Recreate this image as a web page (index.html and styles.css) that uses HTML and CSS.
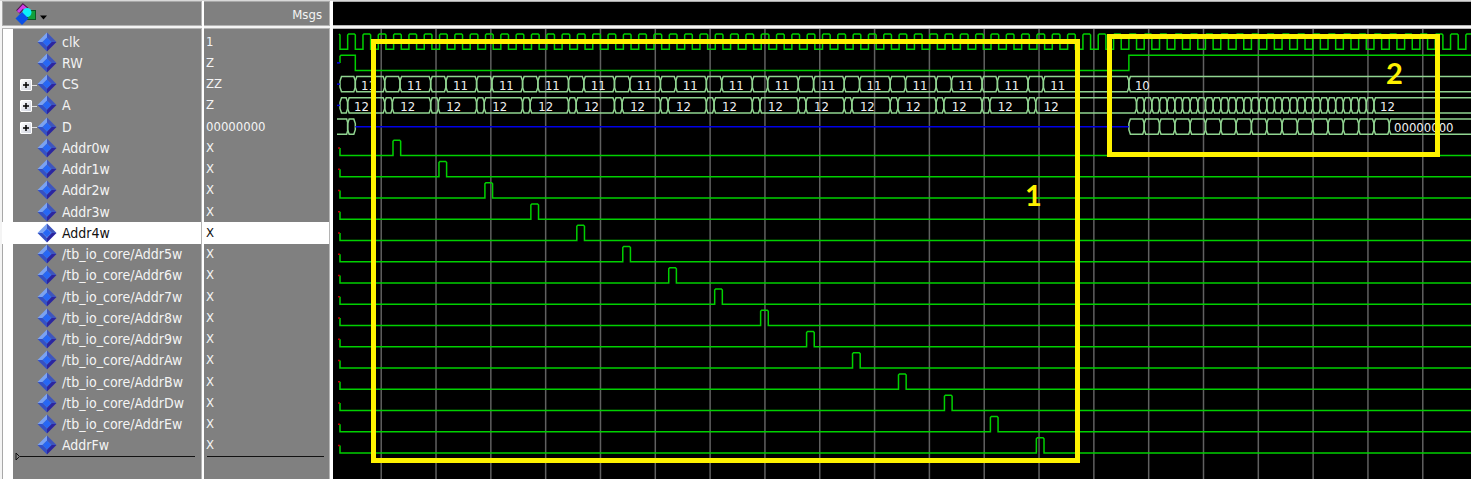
FILE: index.html
```html
<!DOCTYPE html>
<html lang="en">
<head>
<meta charset="utf-8">
<title>Wave</title>
<link rel="stylesheet" href="styles.css">
</head>
<body>
<svg class="defs" aria-hidden="true">
  <symbol id="signal" viewBox="0 0 20 20">
    <path fill="#7aa2f2" d="M10 0.5 0.5 10H5.500L10 5.500Z"/>
    <path fill="#3e55bd" d="M10 0.500 19.500 10H14.500L10 5.500Z"/>
    <path fill="#3450c4" d="M0.500 10 10 19.500V14.500L5.500 10Z"/>
    <path fill="#2b25a0" d="M19.500 10 10 19.500V14.500L14.500 10Z"/>
    <path fill="#2767f5" d="M10 5.500 14.500 10 10 14.500 5.500 10Z"/>
  </symbol>
</svg>
<main class="wave-window">
  <section class="pane names">
    <header class="pane-head">
      <button class="filter" type="button" aria-label="Signal filter">
        <svg width="36" height="22" viewBox="0 0 36 22">
          <path d="M3 9 8 3.500 12 7" fill="none" stroke="#4a184c" stroke-width="5"/>
          <path d="M3 9 8 3.500 12 7" fill="none" stroke="#d23ce6" stroke-width="3"/>
          <rect x="12.500" y="7.500" width="8" height="9" fill="#12a03c" stroke="#0b5a24"/>
          <circle cx="12" cy="9.500" r="4.500" fill="#0cf0fa"/>
          <path d="M7 9 13.500 15.500 7 22 0.500 15.500Z" fill="#0a50e6"/>
          <path d="M25 12.500h7L28.500 16.500Z" fill="#000"/>
        </svg>
      </button>
    </header>
    <div class="pane-body">
      <ul class="rows" id="names"></ul>
      <div class="end-line"><svg class="marker" width="6" height="9" viewBox="0 0 6 9"><path d="M1 1 4.500 4.500 1 8Z" fill="none" stroke="#111"/></svg></div>
    </div>
  </section>
  <section class="pane values">
    <header class="pane-head">Msgs</header>
    <div class="pane-body">
      <ul class="rows" id="values"></ul>
      <div class="end-line"></div>
    </div>
  </section>
  <section class="pane waves">
    <header class="pane-head"></header>
    <div class="pane-body"><svg id="plot" class="plot" role="img" aria-label="Waveforms"></svg></div>
  </section>
</main>
<script src="wave.js"></script>
</body>
</html>
```
FILE: styles.css
```css
* { box-sizing: border-box; }
body {
  margin: 0;
  background: #f4f4f4;
  color: #f4f4f4;
  font: 13px/20px "DejaVu Sans Condensed", "DejaVu Sans", sans-serif;
}
.defs { position: absolute; width: 0; height: 0; }
.wave-window {
  display: flex;
  min-height: 100vh;
  padding-left: 2px;
  border-top: 1px solid #d8d8d8;
}
.pane { display: flex; flex-direction: column; }
.names { width: 202px; }
.values { width: 129px; }
.waves { flex: 1; min-width: 0; }
.pane-head {
  height: 25px;
  border-top: 1px solid #a8a8a8;
  border-bottom: 1px solid #b4b4b4;
  background: #808080;
  margin-bottom: 2px;
}
.names { border-right: 2px solid #fff; }
.values { border-right: 3px solid #fff; }
.names .pane-head, .names .pane-body,
.values .pane-head, .values .pane-body { border-right: 1px solid #b4b4b4; }
.names .pane-head { border-left: 1px solid #a8a8a8; }
.values .pane-head { padding: 3px 7px 0 0; text-align: right; line-height: 20px; }
.waves .pane-head { background: #000; }
.filter { display: block; margin: 0 0 0 12px; padding: 1px 0 0; border: 0; background: none; line-height: 0; }
.pane-body {
  flex: 1;
  padding-top: 2px;
  border-top: 1px solid #b4b4b4;
  background: #808080;
}
.names .pane-body { box-shadow: inset 1px 0 #a8a8a8, inset 11px 0 #fff; }
.waves .pane-body { display: flex; padding: 0; background: #000; }
.rows {
  display: grid;
  grid-template-rows: repeat(20, 1fr);
  height: 425px;
  margin: 0;
  padding: 0;
  list-style: none;
}
.row { display: flex; align-items: center; min-height: 0; white-space: pre; }
.names .row { padding-left: 18px; font-size: 14px; }
.values .row { padding-left: 2px; }
.selected { background: #fff; color: #111; }
.branch { display: flex; align-items: center; width: 17px; height: 20px; }
.branch::after { content: ""; flex: 1; height: 1px; margin-top: 2px; background: #ddd; }
.branch.leaf::after { content: none; }
.expand {
  width: 12px;
  height: 12px;
  margin-top: 2px;
  padding: 0;
  border: 1px solid #fff;
  border-radius: 1px;
  background: linear-gradient(135deg, #fff, #ccd0dc);
  line-height: 0;
}
.expand svg { display: block; }
.gem { width: 20px; height: 20px; margin-right: 5px; }
.end-line { height: 1px; margin: 0 6px 0 18px; background: #111; }
.values .end-line { margin: 0 5px 0 3px; }
.marker { display: block; position: relative; top: -4px; left: -5px; }
.plot { flex: 1; width: 0; overflow: hidden; }
.plot path { fill: none; stroke-width: 1.5; }
.plot .grid { stroke: #606060; }
.plot .logic { stroke: #00d000; }
.plot .bus { stroke: #90d490; }
.plot .hiz { stroke: #0000e6; }
.plot .unknown { stroke: #c00000; }
.plot .label { fill: #f0f0f0; }
.plot .box { fill: none; stroke: #fff200; stroke-width: 5; }
.plot .note { fill: #fff200; font: bold 29px Lato, sans-serif; }
```
FILE: wave.js
```js
const signals = [
  ["clk", "1"], ["RW", "Z"], ["CS", "ZZ", true], ["A", "Z", true], ["D", "00000000", true],
  ["Addr0w", "X"], ["Addr1w", "X"], ["Addr2w", "X"], ["Addr3w", "X"], ["Addr4w", "X"],
  ["/tb_io_core/Addr5w", "X"], ["/tb_io_core/Addr6w", "X"], ["/tb_io_core/Addr7w", "X"],
  ["/tb_io_core/Addr8w", "X"], ["/tb_io_core/Addr9w", "X"], ["/tb_io_core/AddrAw", "X"],
  ["/tb_io_core/AddrBw", "X"], ["/tb_io_core/AddrDw", "X"], ["/tb_io_core/AddrEw", "X"],
  ["AddrFw", "X"]
];
const selected = "Addr4w";
const plus = '<svg width="10" height="10" viewBox="0 0 10 10"><path d="M2 5h6M5 2v6" stroke="#000" stroke-width="1.500"/></svg>';

document.getElementById("names").innerHTML = signals.map(([name, , bus]) =>
  `<li class="row${name === selected ? " selected" : ""}">` +
  (bus ? `<span class="branch"><button class="expand" type="button" aria-label="Expand ${name}">${plus}</button></span>` : '<span class="branch leaf"></span>') +
  `<svg class="gem"><use href="#signal"/></svg><span>${name}</span></li>`).join("");
document.getElementById("values").innerHTML = signals.map(([name, value]) =>
  `<li class="row${name === selected ? " selected" : ""}">${value}</li>`).join("");

// Plot coordinates: x and y start at the top left of the wave pane.
const start = 7, period = 15.318, half = period / 2, swing = 15.25, pitch = 21.25;
const end = 4000;
const low = row => 20.25 + row * pitch;
const mid = row => low(row) - swing / 2;
const out = [];
const path = (kind, d) => out.push(`<path class="${kind}" d="${d}"/>`);
const label = (x, row, text) => out.push(`<text class="label" x="${x}" y="${low(row) - 2}">${text}</text>`);

for (let x = 48.2; x < end; x += 54.82) path("grid", `M${x} 0V2000`);

function bus(row, edges, openLeft) {
  const b = low(row), t = b - swing, m = mid(row);
  for (let i = 0; i + 1 < edges.length; i++) {
    const l = edges[i], r = edges[i + 1];
    if (i === 0 && openLeft) path("bus", `M${l} ${t}H${r - 1}L${r} ${m - 4}V${m + 4}L${r - 1} ${b}H${l}`);
    else path("bus", `M${l} ${m}L${l} ${m - 3}L${l + 1.5} ${t}H${r - 1.5}L${r} ${m - 3}V${m + 3}L${r - 1.5} ${b}H${l + 1.5}L${l} ${m + 3}Z`);
  }
}
function pulse(row, rise, fall) {
  const b = low(row), t = b - swing;
  return `V${b}H${rise}V${t + 1}L${rise + 1} ${t}H${fall - 1}L${fall} ${t + 1}V${b}`;
}

let clk = `M6 ${low(0) - swing}L${start} ${low(0) - swing + 1}`;
for (let x = start; x < end; x += period) clk += pulse(0, x + half, x + period);
path("logic", clk);

const turn = start + half + 51 * period;
path("logic", `M${start} ${mid(1)}V${low(1) - swing + 1}L${start + 1} ${low(1) - swing}H${start + period}V${low(1)}H${turn}V${low(1) - swing}H${end}`);

const cs = [start, start + period], a = [start, start + half];
label(28, 2, "11");
label(21, 3, "12");
for (let k = 0; k < 15; k++) {
  const x = 51.7 + k * 3 * period;
  cs.push(x, x + period);
  a.push(x, x + half);
  label(x + period + 7, 2, "11");
  label(x + half + 8, 3, "12");
}
cs.push(turn, end);
for (let k = 1; k <= 32; k++) a.push(turn + k * half);
a.push(end);
const d = [turn];
for (let k = 1; k <= 17; k++) d.push(turn + k * period);
d.push(end);
bus(2, cs);
bus(3, a);
bus(4, [4, start + half, start + period], true);
bus(4, d);
path("hiz", `M${start + period} ${mid(4)}H${turn}`);
for (const row of [1, 2, 3]) path("hiz", `M4 ${mid(row)}H${start}`);
label(turn + 6, 2, "10");
label(1047, 3, "12");
label(1061, 4, "00000000");

for (let k = 0; k < 15; k++) {
  const row = k + 5, rise = 60 + k * 3 * period;
  path("logic", `M${start} ${mid(row)}` + pulse(row, rise, rise + half) + `H${end}`);
  path("unknown", `M5 ${mid(row)}H7`);
}
out.push('<rect class="box" x="40.500" y="12.500" width="704" height="419"/>');
out.push('<rect class="box" x="776.500" y="7.500" width="328" height="118"/>');
out.push('<text class="note" x="692" y="177">1</text><text class="note" x="1053" y="55">2</text>');
document.getElementById("plot").innerHTML = out.join("");
```
